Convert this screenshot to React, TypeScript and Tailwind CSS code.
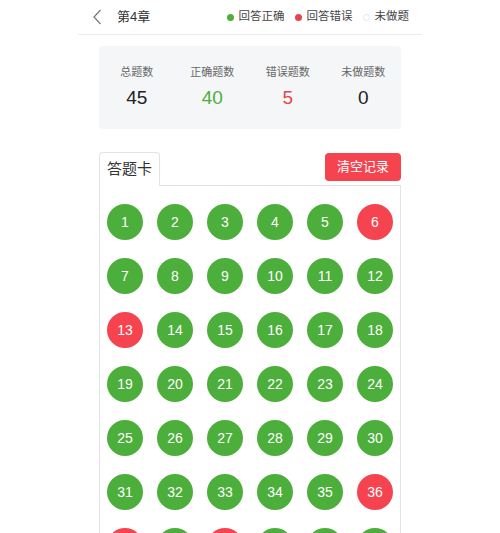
import React from "react";

const wrong = new Set([6, 13, 36, 37, 39]);
const nums = Array.from({ length: 42 }, (_, i) => i + 1);

const stats = [
  { label: "总题数", value: "45", color: "text-[#222]" },
  { label: "正确题数", value: "40", color: "text-[#4fae3c]" },
  { label: "错误题数", value: "5", color: "text-[#e0484c]" },
  { label: "未做题数", value: "0", color: "text-[#222]" },
];

export default function App() {
  return (
    <div
      className="h-[533px] w-[500px] overflow-hidden bg-white"
      style={{ fontFamily: '"Liberation Sans", "Noto Sans CJK SC", sans-serif' }}
    >
      <div className="mx-auto w-[344px]">
        <header className="flex h-[35px] items-center border-b border-[#ececec] pl-[14px] pr-[13px]">
          <svg width="10" height="16" viewBox="0 0 10 16" className="text-[#777]">
            <path d="M8.5 1 L2 8 L8.5 15" fill="none" stroke="currentColor" strokeWidth="1.2" />
          </svg>
          <span className="ml-[15px] text-[13px] text-[#333]">第4章</span>
          <div className="ml-auto flex items-center text-[11.5px] text-[#444]">
            <span className="h-[7px] w-[7px] rounded-full bg-[#4fae3c]" />
            <span className="ml-[5px]">回答正确</span>
            <span className="ml-[10px] h-[7px] w-[7px] rounded-full bg-[#e8434c]" />
            <span className="ml-[5px]">回答错误</span>
            <span className="ml-[10px] h-[7px] w-[7px] rounded-full border border-[#e6e6e6] bg-white" />
            <span className="ml-[5px]">未做题</span>
          </div>
        </header>

        <div className="mx-[21px] mt-[11px] grid h-[83px] grid-cols-4 rounded-[4px] bg-[#f5f6f8] pt-[18px]">
          {stats.map((s) => (
            <div key={s.label} className="flex flex-col items-center">
              <span className="text-[11px] leading-[16px] text-[#666]">{s.label}</span>
              <span className={`mt-[7px] text-[19px] leading-[22px] ${s.color}`}>{s.value}</span>
            </div>
          ))}
        </div>

        <div className="mx-[21px] mt-[23px]">
          <div className="flex items-end justify-between">
            <div className="relative z-10 -mb-px flex h-[34px] w-[61px] items-center justify-center rounded-t-[4px] border border-b-0 border-[#e3e3e3] bg-white text-[15px] text-[#333]">
              答题卡
            </div>
            <button className="mb-[4px] flex h-[28px] w-[76px] items-center justify-center rounded-[4px] bg-[#f5444f] text-[13px] text-white">
              清空记录
            </button>
          </div>
          <div className="grid grid-cols-6 border border-[#e3e3e3] pt-[9px]">
            {nums.map((n) => (
              <div key={n} className="flex h-[54px] items-center justify-center">
                <div
                  className={`flex h-[36px] w-[36px] items-center justify-center rounded-full text-[14px] text-white ${
                    wrong.has(n) ? "bg-[#f5444f]" : "bg-[#4cae3b]"
                  }`}
                >
                  {n}
                </div>
              </div>
            ))}
          </div>
        </div>
      </div>
    </div>
  );
}
